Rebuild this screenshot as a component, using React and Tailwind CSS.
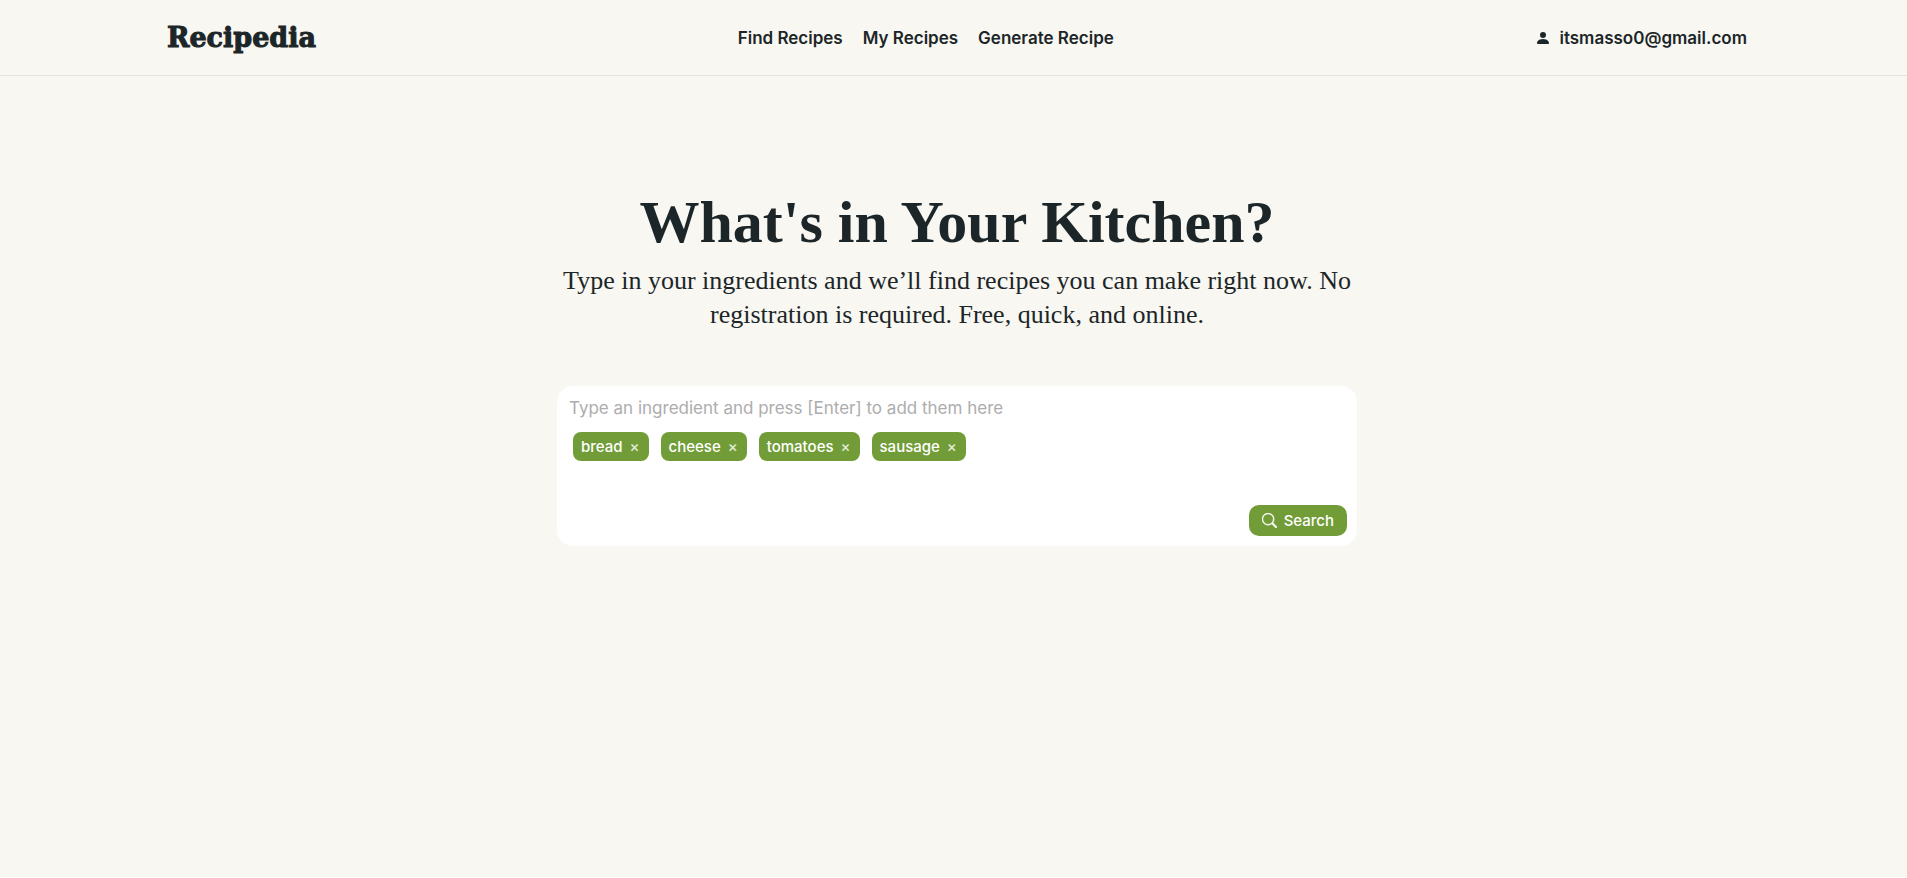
import { useState } from "react";

const links = ["Find Recipes", "My Recipes", "Generate Recipe"];

function PersonIcon() {
  return (
    <svg viewBox="0 0 16 16" className="size-4" fill="currentColor" aria-hidden="true">
      <path d="M3 14s-1 0-1-1 1-4 6-4 6 3 6 4-1 1-1 1zm5-6a3 3 0 1 0 0-6 3 3 0 0 0 0 6" />
    </svg>
  );
}

function SearchIcon() {
  return (
    <svg
      viewBox="0 0 16 16"
      className="size-[15px]"
      fill="currentColor"
      stroke="currentColor"
      strokeWidth="0.4"
      aria-hidden="true"
    >
      <path d="M11.742 10.344a6.5 6.5 0 1 0-1.397 1.398h-.001q.044.06.098.115l3.85 3.85a1 1 0 0 0 1.415-1.414l-3.85-3.85a1 1 0 0 0-.115-.1zM12 6.5a5.5 5.5 0 1 1-11 0 5.5 5.5 0 0 1 11 0" />
    </svg>
  );
}

function Header() {
  return (
    <header className="border-b border-[#e4e5e0] pl-[7px]">
      <div className="mx-auto flex h-[75px] max-w-[1580px] items-center justify-between">
        <a
          href="#home"
          className="font-['DejaVu_Serif',serif] text-[27px] leading-8 font-bold [-webkit-text-stroke:1px_#1c2628]"
        >
          Recipedia
        </a>
        <nav className="flex gap-5 text-[17px] leading-6 font-semibold">
          {links.map((link) => (
            <a key={link} href={"#" + link.toLowerCase().replace(" ", "-")}>
              {link}
            </a>
          ))}
        </nav>
        <a href="#account" className="flex items-center gap-2 text-[17px] leading-6 font-semibold">
          <PersonIcon />
          itsmasso0@gmail.com
        </a>
      </div>
    </header>
  );
}

export default function App() {
  const [items, setItems] = useState(["bread", "cheese", "tomatoes", "sausage"]);
  const [draft, setDraft] = useState("");

  const add = (event) => {
    if (event.key !== "Enter") return;
    event.preventDefault();
    const value = draft.trim();
    if (value && !items.includes(value)) setItems([...items, value]);
    setDraft("");
  };

  return (
    <div className="min-h-[calc(100vh-1px)] bg-[#f8f7f2] font-[Inter,sans-serif] text-[#1c2628]">
      <Header />
      <main className="pt-[108px] pl-[7px]">
        <div className="mx-auto max-w-[800px]">
          <div className="text-center font-['Liberation_Serif',serif]">
            <h1 className="text-[60px] leading-[76px] font-bold">What's in Your Kitchen?</h1>
            <p className="mt-1 text-[26px] leading-[34px]">
              Type in your ingredients and we’ll find recipes you can make right now. No
              registration is required. Free, quick, and online.
            </p>
          </div>
          <form
            className="mt-[54px] flex min-h-40 flex-col rounded-2xl bg-white p-[10px]"
            onSubmit={(event) => event.preventDefault()}
          >
            <input
              type="text"
              aria-label="Ingredient"
              value={draft}
              onChange={(event) => setDraft(event.target.value)}
              onKeyDown={add}
              placeholder="Type an ingredient and press [Enter] to add them here"
              className="h-6 w-full px-[2px] text-[17px] leading-6 outline-none placeholder:text-[#adadad]"
            />
            <ul className="mt-3 flex flex-wrap gap-3 px-[6px]">
              {items.map((item) => (
                <li
                  key={item}
                  className="flex h-[29px] items-center gap-[6px] rounded-lg bg-[#719c37] px-2 text-[15px] leading-5 font-medium text-white"
                >
                  {item}
                  <button
                    type="button"
                    aria-label={"Remove " + item}
                    onClick={() => setItems(items.filter((other) => other !== item))}
                    className="w-3 text-white/80"
                  >
                    ×
                  </button>
                </li>
              ))}
            </ul>
            <button
              type="submit"
              className="mt-auto flex h-[31px] items-center gap-[7px] self-end rounded-[10px] bg-[#719c37] px-[13px] text-[15px] leading-5 font-medium text-white"
            >
              <SearchIcon />
              Search
            </button>
          </form>
        </div>
      </main>
    </div>
  );
}
